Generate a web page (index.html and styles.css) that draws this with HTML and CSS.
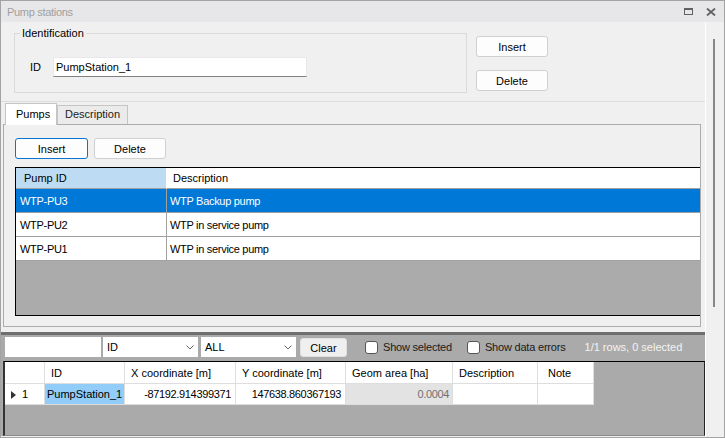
FILE: index.html
```html
<!DOCTYPE html>
<html lang="en">
<head>
    <meta charset="UTF-8">
    <title>Pump stations</title>
    <link rel="stylesheet" href="styles.css">
</head>
<body>
    <div class="window">
        <div class="titlebar">
            <span class="title">Pump stations</span>
            <span class="title-icons">
                <svg width="10" height="8" viewBox="0 0 10 8"><rect x="0.5" y="0.5" width="8" height="6" fill="none" stroke="#616161"/><rect x="0" y="0" width="9" height="2" fill="#616161"/></svg>
                <svg width="10" height="8" viewBox="0 0 10 8"><path d="M1 0.5 L9 7.5 M9 0.5 L1 7.5" stroke="#616161" stroke-width="1.8"/></svg>
            </span>
        </div>
        <div class="frame">
            <div class="main">
                <div class="top">
                    <fieldset class="group">
                        <legend>Identification</legend>
                        <div class="id-row">
                            <span class="id-label">ID</span>
                            <div class="text-input">PumpStation_1</div>
                        </div>
                    </fieldset>
                    <div class="side-buttons">
                        <button class="btn">Insert</button>
                        <button class="btn">Delete</button>
                    </div>
                </div>

                <div class="tabs">
                    <div class="tab-strip">
                        <span class="tab active">Pumps</span>
                        <span class="tab">Description</span>
                    </div>
                    <div class="tab-panel">
                        <div class="panel-buttons">
                            <button class="btn default">Insert</button>
                            <button class="btn">Delete</button>
                        </div>
                        <div class="pump-grid">
                            <table>
                                <tr class="head">
                                    <th class="col-id current">Pump ID</th>
                                    <th>Description</th>
                                </tr>
                                <tr class="selected">
                                    <td class="col-id">WTP-PU3</td>
                                    <td>WTP Backup pump</td>
                                </tr>
                                <tr>
                                    <td class="col-id">WTP-PU2</td>
                                    <td>WTP in service pump</td>
                                </tr>
                                <tr>
                                    <td class="col-id">WTP-PU1</td>
                                    <td>WTP in service pump</td>
                                </tr>
                            </table>
                        </div>
                    </div>
                </div>

                <div class="splitter"></div>

                <div class="lower">
                    <div class="toolbar">
                        <div class="search"></div>
                        <div class="combo"><span>ID</span><svg width="8" height="5" viewBox="0 0 8 5"><path d="M0.5 0.5 L4 4 L7.5 0.5" fill="none" stroke="#6a6a6a"/></svg></div>
                        <div class="combo"><span>ALL</span><svg width="8" height="5" viewBox="0 0 8 5"><path d="M0.5 0.5 L4 4 L7.5 0.5" fill="none" stroke="#6a6a6a"/></svg></div>
                        <button class="btn clear">Clear</button>
                        <label class="check first"><span class="box"></span>Show selected</label>
                        <label class="check"><span class="box"></span>Show data errors</label>
                        <span class="status">1/1 rows, 0 selected</span>
                    </div>
                    <div class="data-grid">
                        <table>
                            <tr class="head">
                                <th class="c-row"></th>
                                <th class="c-id">ID</th>
                                <th class="c-x">X coordinate [m]</th>
                                <th class="c-y">Y coordinate [m]</th>
                                <th class="c-area">Geom area [ha]</th>
                                <th class="c-desc">Description</th>
                                <th class="c-note">Note</th>
                            </tr>
                            <tr>
                                <td class="c-row"><svg width="5" height="8" viewBox="0 0 5 8"><path d="M0 0 L5 4 L0 8 Z" fill="#333"/></svg><span>1</span></td>
                                <td class="c-id active-cell">PumpStation_1</td>
                                <td class="num">-87192.914399371</td>
                                <td class="num">147638.860367193</td>
                                <td class="num readonly">0.0004</td>
                                <td></td>
                                <td></td>
                            </tr>
                        </table>
                    </div>
                </div>
            </div>
            <div class="vscroll">
                <div class="thumb"></div>
            </div>
        </div>
    </div>
</body>
</html>
```

FILE: styles.css
```css
* {
    box-sizing: border-box;
}
body {
    margin: 0;
    font-family: "Liberation Sans", Arial, sans-serif;
    font-size: 11px;
    color: #000;
}
.window {
    width: 725px;
    height: 438px;
    border: 1px solid #a3a3a3;
    background: #f0f0f0;
    display: flex;
    flex-direction: column;
    overflow: hidden;
}
.titlebar {
    height: 21px;
    flex: none;
    background: #e7e7ea;
    display: flex;
    align-items: center;
    padding: 0 8px 0 6px;
    color: #a0a0a0;
    letter-spacing: -0.3px;
}
.title {
    flex: 1;
}
.title-icons {
    display: flex;
    gap: 12px;
    align-items: center;
}
.title-icons svg {
    display: block;
}
.frame {
    flex: 1;
    display: flex;
    min-height: 0;
}
.main {
    width: 704px;
    flex: none;
    display: flex;
    flex-direction: column;
}
.vscroll {
    flex: 1;
    border-left: 1px solid #fff;
    padding: 17px 0 0 7px;
}
.thumb {
    width: 2px;
    height: 268px;
    background: #888;
}

/* identification */
.top {
    height: 80px;
    flex: none;
    display: flex;
    padding-left: 13px;
    border-bottom: 1px solid #dddddd;
}
.group {
    margin: 4px 0 0 0;
    width: 453px;
    height: 67px;
    border: 1px solid #dadada;
    padding: 0 0 0 5px;
    min-width: 0;
}
.group legend {
    padding: 0 2px;
    line-height: 14px;
}
.id-row {
    display: flex;
    align-items: center;
    margin-top: 17px;
}
.id-label {
    width: 23px;
    margin-left: 10px;
}
.text-input {
    width: 254px;
    height: 20px;
    background: #fff;
    border: 1px solid #e8e8e8;
    border-bottom-color: #808080;
    padding: 3px 2px;
}
.side-buttons {
    display: flex;
    flex-direction: column;
    gap: 13px;
    margin-left: 9px;
    padding-top: 14px;
}
.btn {
    width: 72px;
    height: 21px;
    background: #fdfdfd;
    border: 1px solid #d0d0d0;
    border-radius: 3px;
    font-family: inherit;
    font-size: 11px;
    color: #000;
    padding: 0;
}
.btn.default {
    border-color: #0a74d1;
    width: 73px;
}

/* tabs */
.tabs {
    height: 225px;
    flex: none;
    display: flex;
    flex-direction: column;
    padding: 0 4px 0 2px;
}
.tab-strip {
    height: 22px;
    flex: none;
    display: flex;
    align-items: flex-end;
    padding-left: 2px;
}
.tab {
    height: 19px;
    padding: 2px 7px 0;
    background: #ebebeb;
    border: 1px solid #c5c5c5;
    border-bottom: none;
    color: #222;
}
.tab.active {
    position: relative;
    z-index: 1;
    height: 22px;
    width: 52px;
    margin-bottom: -1px;
    padding: 4px 0 0 10px;
    background: #fff;
    color: #000;
}
.tab-panel {
    flex: 1;
    border: 1px solid #acacac;
    padding: 13px 0 10px 11px;
    display: flex;
    flex-direction: column;
}
.panel-buttons {
    display: flex;
    gap: 6px;
    flex: none;
}
.pump-grid {
    margin-top: 8px;
    flex: 1;
    background: #ababab;
    border-top: 1px solid #000;
    border-left: 1px solid #000;
    border-bottom: 1px solid #000;
}
.pump-grid table {
    width: 100%;
    border-collapse: separate;
    border-spacing: 0;
}
.pump-grid th,
.pump-grid td {
    text-align: left;
    font-weight: normal;
    background: #fff;
    border-bottom: 1px solid #a0a0a0;
    padding: 0 0 0 3px;
    height: 24px;
    white-space: nowrap;
}
.pump-grid td {
    letter-spacing: -0.3px;
}
.pump-grid tr.head th {
    height: 21px;
    padding-left: 6px;
}
.pump-grid .col-id {
    width: 151px;
    border-right: 1px solid #a0a0a0;
    padding-left: 4px;
}
.pump-grid tr.head th.col-id {
    padding-left: 8px;
}
.pump-grid th.current {
    background: #bddcf3;
    border-right-color: #fff;
}
.pump-grid tr.selected td {
    background: #0078d7;
    color: #fff;
}

/* splitter */
.splitter {
    height: 8px;
    flex: none;
    border-bottom: 3px solid #6e6e6e;
}

/* lower grid */
.lower {
    flex: 1;
    margin-bottom: 1px;
    background: #aaaaaa;
    display: flex;
    flex-direction: column;
    padding-left: 2px;
}
.toolbar {
    height: 26px;
    flex: none;
    display: flex;
    align-items: flex-start;
    padding: 2px 0 0 2px;
}
.search {
    width: 96px;
    height: 20px;
    background: #fff;
}
.combo {
    width: 95px;
    height: 20px;
    margin-left: 2px;
    background: #fff;
    display: flex;
    align-items: center;
    justify-content: space-between;
    padding: 0 4px 0 4px;
}
.combo + .combo {
    margin-left: 3px;
}
.clear {
    width: 47px;
    height: 19px;
    margin: 1px 0 0 4px;
    background: #efefef;
    border-color: #e0e0e0;
}
.check {
    display: flex;
    align-items: center;
    gap: 5px;
    height: 20px;
    margin-left: 15px;
    color: #1a1a1a;
    letter-spacing: -0.2px;
}
.check.first {
    margin-left: 18px;
}
.box {
    width: 13px;
    height: 13px;
    background: #fff;
    border: 1px solid #555;
    border-radius: 3px;
}
.status {
    margin-left: 19px;
    line-height: 20px;
    color: #f3f3f3;
}
.data-grid {
    flex: 1;
    border-top: 1px solid #000;
    border-left: 2px solid #333;
    border-right: 1px solid #222;
    border-bottom: 1px solid #8a8a8a;
}
.data-grid table {
    border-collapse: separate;
    border-spacing: 0;
}
.data-grid th,
.data-grid td {
    background: #fff;
    text-align: left;
    font-weight: normal;
    border-right: 1px solid #dedede;
    border-bottom: 1px solid #dedede;
    padding: 0 0 0 6px;
    white-space: nowrap;
}
.data-grid th {
    height: 22px;
}
.data-grid td {
    height: 21px;
}
.data-grid .c-row { width: 40px; }
.data-grid .c-id { width: 80px; }
.data-grid .c-x { width: 111px; }
.data-grid .c-y { width: 110px; }
.data-grid .c-area { width: 107px; }
.data-grid .c-desc { width: 85px; }
.data-grid .c-note { width: 56px; padding-left: 10px; }
.data-grid td.c-row {
    padding-left: 6px;
}
.data-grid td.c-row svg {
    vertical-align: -1px;
}
.data-grid td.c-row span {
    margin-left: 6px;
}
.data-grid td.active-cell {
    background: #91cdf8;
    padding-left: 2px;
}
.data-grid td.num {
    text-align: right;
    padding: 0 4px 0 0;
    letter-spacing: -0.35px;
}
.data-grid td.readonly {
    background: #e3e3e3;
    color: #707070;
    padding-right: 3px;
}
```
